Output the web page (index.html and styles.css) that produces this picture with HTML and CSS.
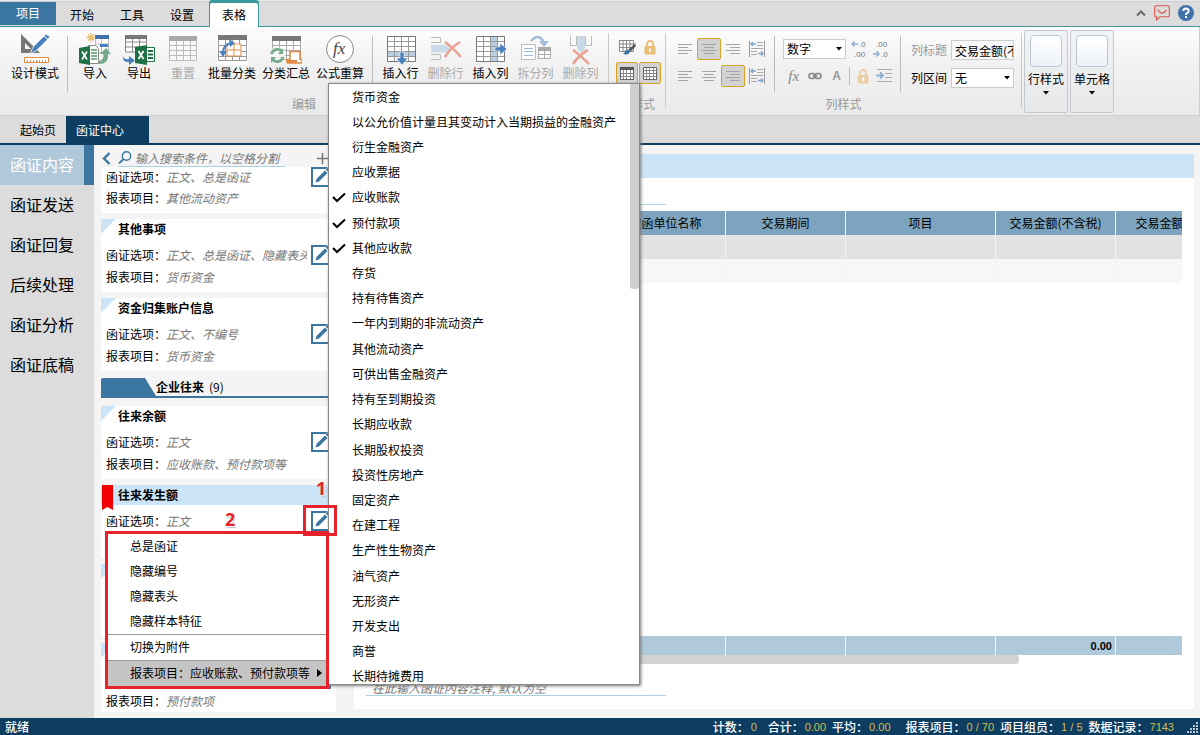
FILE: index.html
```html
<!DOCTYPE html>
<html lang="zh-CN">
<head>
<meta charset="utf-8">
<title>函证中心</title>
<link rel="stylesheet" href="styles.css">
</head>
<body>
<svg class="defs" aria-hidden="true">
  <defs>
    <symbol id="edit" viewBox="0 0 20 20"><rect x="1" y="1" width="18" height="18" fill="#fff" stroke="#3b76a0" stroke-width="2"/><path d="M4.500 15.500l1-3.500L14 3.500l2.500 2.500L8 14.500z" fill="#3b76a0"/><path d="M14.500 2.500l2-2 3 3-2 2z" fill="#3b76a0" stroke="#fff" stroke-width=".6"/></symbol>
    <symbol id="check" viewBox="0 0 14 12"><path d="M1 6l4 4 8-7.500" fill="none" stroke="#000" stroke-width="2"/></symbol>
    <symbol id="down" viewBox="0 0 6 4"><path d="M0 0h6L3 3.600z" fill="#000"/></symbol>
    <symbol id="left-al" viewBox="0 0 16 12"><path d="M1 1.500h14M1 4.500h10M1 7.500h14M1 10.500h10" stroke="#a4a4a4"/></symbol>
    <symbol id="center-al" viewBox="0 0 16 12"><path d="M1 1.500h14M3 4.500h10M1 7.500h14M3 10.500h10" stroke="#a4a4a4"/></symbol>
    <symbol id="right-al" viewBox="0 0 16 12"><path d="M1 1.500h14M5 4.500h10M1 7.500h14M5 10.500h10" stroke="#a4a4a4"/></symbol>
    <symbol id="wrap" viewBox="0 0 16 16"><path d="M.5 0v16M15.500 0v16" stroke="#999"/><path d="M8 1.500h6M8 4.500h6M2 7.500h12M2 10.500h6M2 13.500h6" stroke="#a8a8a8"/><path d="M2 3h5M9 12.500h5M4 1L2 3l2 2M12 10.500l2 2-2 2" fill="none" stroke="#7fa8cf" stroke-width="1.400"/></symbol>
    <symbol id="lock" viewBox="0 0 12 15"><path d="M3 7V4a3 3 0 0 1 6 0v3" fill="none" stroke="#e8bc74" stroke-width="1.800"/><rect x=".5" y="6" width="11" height="8.500" rx="1" fill="#e8bc74"/><path d="M6 8.500v4M4.800 9.500h2.400" stroke="#fff" stroke-width="1.400"/></symbol>
    <symbol id="grid-s" viewBox="0 0 14 13"><path d="M.5.500h13v12H.500z" fill="#fff" stroke="#666"/><path d="M1 3.500h12M1 6.500h12M1 9.500h12M3.500 1v11M6.500 1v11M10.500 1v11" stroke="#888"/></symbol>
    <symbol id="grid-h" viewBox="0 0 14 13"><path d="M.5.500h13v12H.500z" fill="#fff" stroke="#666"/><path d="M0 1.500h14" stroke="#555" stroke-width="3"/><path d="M1 6.500h12M1 9.500h12M3.500 3v9M6.500 3v9M10.500 3v9" stroke="#888"/></symbol>
  </defs>
</svg>

<div class="app">
  <header class="tabbar">
    <button class="file-tab">项目</button>
    <nav class="tabs">
      <button class="tab">开始</button>
      <button class="tab">工具</button>
      <button class="tab">设置</button>
      <button class="tab tab-active">表格</button>
    </nav>
    <div class="window-tools">
      <button aria-label="收起"><svg width="10" height="6" viewBox="0 0 10 6"><path d="M1 5.500L5 1.500l4 4" fill="none" stroke="#666" stroke-width="2"/></svg></button>
      <button aria-label="反馈"><svg width="16" height="16" viewBox="0 0 16 16"><path d="M2 .7h12q1.300 0 1.300 1.300v8.500q0 1.300-1.300 1.300H6l-3.500 3.200v-3.200H2Q.7 11.800.7 10.500V2Q.7.700 2 .7z" fill="none" stroke="#d9574d" stroke-width="1.100"/><path d="M3.500 5l2 1.500M12.500 5l-2 2q-2.300 2.300-5 0" fill="none" stroke="#d9574d" stroke-width="1.200"/></svg></button>
      <button aria-label="帮助"><svg width="16" height="16" viewBox="0 0 16 16"><circle cx="8" cy="8" r="8" fill="#3f72ab"/><path d="M5.300 6Q5.300 3.500 8 3.500T10.700 6Q10.700 7.300 9 8.200 8 8.700 8 10M8 11v2" fill="none" stroke="#fff" stroke-width="2"/></svg></button>
    </div>
  </header>

  <section class="ribbon">
    <div class="group">
      <div class="group-body group-edit">
        <button class="tool wide"><svg viewBox="0 0 32 32"><path d="M2 1v19h19zM6 10l6 6H6z" fill="#777" fill-rule="evenodd"/><path d="M11 21l3-7L27 1l4 3-13 13z" fill="#4a80bd" stroke="#f5f5f5" stroke-width=".8"/><path d="M25 3l4 3.500" stroke="#fff"/><path d="M5.500 24.500h24v5h-24zM8.500 27v2M11.500 27v2M14.500 27v2M17.500 27v2M20.500 27v2M23.500 27v2M26.500 27v2" fill="#fff" stroke="#e28b46"/></svg>设计模式</button>
        <i class="sep"></i>
        <button class="tool"><svg viewBox="0 0 32 32"><path d="M16.500 2.500h13v17h-13zM17 11h12M22.500 3v16" fill="#fff" stroke="#b5bcc4"/><path d="M16 2h14v4H16z" fill="#3f70ad"/><path d="M21 11h8v3h-8z" fill="#4a80bd"/><path d="M12 0v9M7.500 4.500h9M9 1.500l6 6M15 1.500l-6 6" stroke="#edc06d" stroke-width="1.300"/><path d="M9.500 12.500h7l3 3v15h-10z" fill="#fff" stroke="#888"/><path d="M12 17h6M12 20h6M12 23h6M12 26h6" stroke="#56966a" stroke-width="1.600"/><path d="M0 15l11-2v19L0 30z" fill="#1e7145"/><path d="M3 18.500l5 8M8 18.500l-5 8" stroke="#fff" stroke-width="1.700"/><path d="M20 31v-3q5-1 4.500-7H21l6-6 5 6h-3q1 10-9 10z" fill="#74a98c"/></svg>导入</button>
        <button class="tool"><svg viewBox="0 0 32 32"><path d="M2.500 3h21v16h-21zM2.500 9h21M2.500 14h21M9.500 3v16M16.500 3v16" fill="#fff" stroke="#888"/><path d="M2 2h22v4H2z" fill="#777"/><path d="M22.500 14.500h9v14h-9z" fill="#fff" stroke="#1e7145"/><path d="M25 18h5M25 21.500h5M25 25h5" stroke="#1e7145" stroke-width="2"/><path d="M12 14l12-2v20l-12-2z" fill="#1e7145"/><path d="M15.500 18l5 8M20.500 18l-5 8" stroke="#fff" stroke-width="1.800"/><path d="M0 23q1 4 6 3v-3l6 4.500L6 32v-3Q-1 29 0 23z" fill="#4a80bd"/></svg>导出</button>
        <button class="tool disabled"><svg viewBox="0 0 32 32"><path d="M2.500 3.500h27v24h-27zM3 12.500h26M3 17.500h26M3 22.500h26M9.500 7v20M16.500 7v20M23.500 7v20" fill="#f8f8f8" stroke="#bbb"/><path d="M2 3h28v5H2z" fill="#a9a9a9"/></svg>重置</button>
        <button class="tool wide"><svg viewBox="0 0 32 32"><path d="M1 2h31v30H1z" fill="#fff"/><path d="M2.500 3.500h28v24h-28zM3 12.500h27M3 18.500h27M3 23.500h27M9.500 7v20M16.500 7v20M23.500 7v20" fill="#fff" stroke="#999"/><path d="M2 2h29v5H2z" fill="#777"/><path d="M11 11h14v12H11zM18 11v12M11 17h14" fill="#fff" stroke="#e28b46"/><path d="M7 20q0-8 8-10" fill="none" stroke="#4a80bd" stroke-width="2.200"/><path d="M13 6l6 4-5 4zM3 18h8l-4 6z" fill="#4a80bd"/></svg>批量分类</button>
        <button class="tool wide"><svg viewBox="0 0 32 32"><path d="M2.500 4.500h28v22h-28zM3 12.500h27M3 17.500h27M3 22.500h27M9.500 7v20M16.500 7v20M23.500 7v20" fill="#fff" stroke="#aaa"/><path d="M2 3h29v5H2z" fill="#777"/><circle cx="7" cy="22" r="8" fill="#f5f5f5"/><path d="M1.500 21a6 6 0 0 1 10-3M13 24a6 6 0 0 1-10 3" fill="none" stroke="#74a98c" stroke-width="2.800"/><path d="M13 15v6H8zM1 30v-6h5z" fill="#74a98c"/><path d="M20 18.500h10v8h2v2.500q0 1-1 1H18q-1 0-1-1v-2.500h3z" fill="#fff" stroke="#e28b46" stroke-width="1.600"/><path d="M17 27h10v3H17z" fill="#e28b46"/></svg>分类汇总</button>
        <button class="tool wide"><svg viewBox="0 0 32 32"><circle cx="16" cy="16" r="13.500" fill="#fff" stroke="#888"/><text x="9" y="21" class="fx-text">fx</text></svg>公式重算</button>
        <i class="sep"></i>
        <button class="tool mid"><svg viewBox="0 0 32 32"><path d="M2.500 3.500h28v25h-28z" fill="#fff" stroke="#777"/><path d="M3 18h27v5H3z" fill="#b8cfe4"/><path d="M3 8.500h27M3 13.500h27M3 18.500h27M3 23.500h27M9.500 4v24M16.500 4v24M23.500 4v24" stroke="#999"/><path d="M15 19h4v6h4l-6 7-6-7h4z" fill="#4a80bd" stroke="#fff" stroke-width=".6"/></svg>插入行</button>
        <button class="tool mid disabled"><svg viewBox="0 0 32 32"><path d="M1 4.500h9.500v5H1M1 26.500h9.500v-5H1" fill="none" stroke="#bbb"/><path d="M1 12h15l4 3.500-4 4H1z" fill="#cbdae8"/><path d="M15 9q7 5 16 15M30 9Q20 15 15 24" fill="none" stroke="#e9a394" stroke-width="2.600"/></svg>删除行</button>
        <button class="tool mid"><svg viewBox="0 0 32 32"><path d="M1.500 3.500h28v25h-28z" fill="#fff" stroke="#777"/><path d="M16 4h7v24h-7z" fill="#b8cfe4"/><path d="M2 8.500h27M2 13.500h27M2 18.500h27M2 23.500h27M8.500 4v24M15.500 4v24M22.500 4v24" stroke="#999"/><path d="M20 14h5v-4l7 6-7 6v-4h-5z" fill="#4a80bd" stroke="#fff" stroke-width=".6"/></svg>插入列</button>
        <button class="tool mid disabled"><svg viewBox="0 0 32 32"><path d="M11 8q8-9 13 2" fill="none" stroke="#a4bdd8" stroke-width="2.600"/><path d="M19 8h10l-5 6z" fill="#a4bdd8"/><path d="M1.500 11.500h14v15h-14z" fill="#fff" stroke="#bbb"/><path d="M4 15.500h9M4 18.500h9M4 22.500h9" stroke="#9db8d4"/><path d="M18.500 14.500h12v11h-12zM19 21.500h12M24.500 15v10" fill="#fff" stroke="#aaa"/><path d="M18 14h13v4H18z" fill="#aaa"/></svg>拆分列</button>
        <button class="tool mid disabled"><svg viewBox="0 0 32 32"><path d="M5.500 3v9.500h6V3M26.500 3v9.500h-6V3" fill="none" stroke="#bbb"/><path d="M12 3h8v13l-4 4-4-4z" fill="#cbdae8"/><path d="M8 17q7 5 16 14M23 17Q14 22 8 31" fill="none" stroke="#e9a394" stroke-width="2.600"/></svg>删除列</button>
      </div>
      <div class="group-label">编辑</div>
    </div>
    <i class="group-sep"></i>
    <div class="group">
      <div class="group-body style-grid">
        <button class="mini" aria-label="格式刷"><svg width="18" height="16" viewBox="0 0 18 16"><path d="M1.500 1.500h14v11h-14zM2 5h13M2 8.500h13M5 2v10M8.500 2v10M12 2v10" fill="#fff" stroke="#888"/><path d="M17.500 4v3.500l-5 5-2-2z" fill="#555"/><path d="M5 15q2-1 2-3.500l3-1 2 2q-1 4-7 2.500z" fill="#3b76a0"/></svg></button>
        <button class="mini" aria-label="锁定"><svg width="12" height="15"><use href="#lock"/></svg></button>
        <button class="mini pressed" aria-label="表头网格"><svg width="14" height="13"><use href="#grid-h"/></svg></button>
        <button class="mini pressed" aria-label="网格"><svg width="14" height="13"><use href="#grid-s"/></svg></button>
      </div>
      <div class="group-label">表样式</div>
    </div>
    <i class="group-sep"></i>
    <div class="group">
      <div class="group-body">
        <div class="align-grid">
          <button class="mini" aria-label="标题左对齐"><svg width="16" height="12"><use href="#left-al"/></svg></button>
          <button class="mini pressed" aria-label="标题居中"><svg width="16" height="12"><use href="#center-al"/></svg></button>
          <button class="mini" aria-label="标题右对齐"><svg width="16" height="12"><use href="#right-al"/></svg></button>
          <button class="mini" aria-label="标题换行"><svg width="16" height="16"><use href="#wrap"/></svg></button>
          <button class="mini" aria-label="左对齐"><svg width="16" height="12"><use href="#left-al"/></svg></button>
          <button class="mini" aria-label="居中"><svg width="16" height="12"><use href="#center-al"/></svg></button>
          <button class="mini pressed" aria-label="右对齐"><svg width="16" height="12"><use href="#right-al"/></svg></button>
          <button class="mini" aria-label="换行"><svg width="16" height="16"><use href="#wrap"/></svg></button>
        </div>
        <i class="sep"></i>
        <div class="format">
          <div class="format-row">
            <span class="combo"><select aria-label="数据格式"><option>数字</option></select><svg width="6" height="4"><use href="#down"/></svg></span>
            <button class="mini" aria-label="增加小数位"><svg width="16" height="20" viewBox="0 0 16 20"><text x="8" y="8" class="dec">.0</text><text x="3" y="18" class="dec">.00</text><path d="M1 5h6M3.500 2.500L1 5l2.500 2.500" fill="none" stroke="#8fb0d0" stroke-width="1.500"/></svg></button>
            <button class="mini" aria-label="减少小数位"><svg width="16" height="20" viewBox="0 0 16 20"><text x="3" y="8" class="dec">.00</text><text x="8" y="18" class="dec">.0</text><path d="M0 15h6M3.500 12.500L6 15l-2.500 2.500" fill="none" stroke="#8fb0d0" stroke-width="1.500"/></svg></button>
          </div>
          <div class="format-row">
            <button class="mini fx">fx</button>
            <button class="mini" aria-label="链接"><svg width="14" height="8" viewBox="0 0 14 8"><rect x="1" y="1.500" width="6" height="5" rx="2.500" fill="none" stroke="#888" stroke-width="1.600"/><rect x="7" y="1.500" width="6" height="5" rx="2.500" fill="none" stroke="#888" stroke-width="1.600"/><path d="M4.500 4h5" stroke="#888" stroke-width="1.500"/></svg></button>
            <button class="mini letter">A</button>
            <i class="sep-s"></i>
            <button class="mini faded" aria-label="锁定列"><svg width="12" height="15"><use href="#lock"/></svg></button>
            <button class="mini" aria-label="缩进"><svg width="16" height="14" viewBox="0 0 16 14"><path d="M1 .5h15M9 4.500h7M9 8.500h7M1 12.500h15" stroke="#aaa"/><path d="M0 6.500h6M4 3.500l3 3-3 3" fill="none" stroke="#8fb0d0" stroke-width="1.800"/></svg></button>
          </div>
        </div>
        <i class="sep"></i>
        <div class="fields">
          <label class="off" for="col-title">列标题</label><input id="col-title" value="交易金额(不含税)">
          <label for="col-range">列区间</label><span class="combo"><select id="col-range"><option>无</option></select><svg width="6" height="4"><use href="#down"/></svg></span>
        </div>
      </div>
      <div class="group-label">列样式</div>
    </div>
    <i class="group-sep"></i>
    <div class="galleries">
      <button class="gallery"><i class="swatch"></i>行样式<svg width="6" height="4"><use href="#down"/></svg></button>
      <button class="gallery"><i class="swatch"></i>单元格<svg width="6" height="4"><use href="#down"/></svg></button>
    </div>
  </section>

  <nav class="doc-tabs">
    <button class="doc-tab">起始页</button>
    <button class="doc-tab doc-active">函证中心</button>
  </nav>

  <div class="body">
    <nav class="side">
      <button class="side-item side-active">函证内容</button>
      <button class="side-item">函证发送</button>
      <button class="side-item">函证回复</button>
      <button class="side-item">后续处理</button>
      <button class="side-item">函证分析</button>
      <button class="side-item">函证底稿</button>
    </nav>

    <section class="panel">
      <div class="search">
        <button aria-label="返回"><svg width="9" height="13" viewBox="0 0 9 13"><path d="M7.500 1L2 6.500 7.500 12" fill="none" stroke="#3b76a0" stroke-width="2.400"/></svg></button>
        <div class="search-box">
          <svg width="14" height="13" viewBox="0 0 14 13"><circle cx="8.500" cy="5" r="4.200" fill="none" stroke="#3b76a0" stroke-width="1.400"/><path d="M5.500 8L1 12.500" stroke="#3b76a0" stroke-width="1.800"/></svg>
          <input aria-label="搜索" placeholder="输入搜索条件，以空格分割">
        </div>
        <button class="add" aria-label="新增"><svg width="11" height="11" viewBox="0 0 11 11"><path d="M5.500 0v11M0 5.500h11" stroke="#777" stroke-width="1.500"/></svg></button>
      </div>
      <div class="list">
        <article class="card card-cut">
          <div class="row"><span>函证选项：</span><em>正文、总是函证</em><button aria-label="编辑"><svg width="20" height="20"><use href="#edit"/></svg></button></div>
          <div class="row"><span>报表项目：</span><em>其他流动资产</em></div>
        </article>
        <article class="card">
          <h3>其他事项</h3>
          <div class="row"><span>函证选项：</span><em>正文、总是函证、隐藏表头</em><button aria-label="编辑"><svg width="20" height="20"><use href="#edit"/></svg></button></div>
          <div class="row"><span>报表项目：</span><em>货币资金</em></div>
        </article>
        <article class="card">
          <h3>资金归集账户信息</h3>
          <div class="row"><span>函证选项：</span><em>正文、不编号</em><button aria-label="编辑"><svg width="20" height="20"><use href="#edit"/></svg></button></div>
          <div class="row"><span>报表项目：</span><em>货币资金</em></div>
        </article>
        <div class="section"><svg width="55" height="18" viewBox="0 0 55 18"><path d="M0 18V2q0-2 2-2h42l11 18z" fill="#3b76a0"/></svg><b>企业往来</b><span>(9)</span></div>
        <article class="card">
          <h3>往来余额</h3>
          <div class="row"><span>函证选项：</span><em>正文</em><button aria-label="编辑"><svg width="20" height="20"><use href="#edit"/></svg></button></div>
          <div class="row"><span>报表项目：</span><em>应收账款、预付款项等</em></div>
        </article>
        <article class="card card-active">
          <svg class="bookmark" width="11" height="25" viewBox="0 0 11 25"><path d="M0 0h11v25l-5.500-3L0 25z" fill="#f00000"/></svg>
          <h3>往来发生额</h3>
          <div class="row"><span>函证选项：</span><em>正文</em><button aria-label="编辑"><svg width="20" height="20"><use href="#edit"/></svg></button></div>
          <div class="row"></div>
        </article>
        <article class="card"><h3></h3><div class="row"></div><div class="row"></div></article>
        <article class="card">
          <h3></h3>
          <div class="row"><em></em><button aria-label="编辑"><svg width="20" height="20"><use href="#edit"/></svg></button></div>
          <div class="row"><span>报表项目：</span><em>预付款项</em></div>
        </article>
      </div>
    </section>

    <main class="sheet">
      <div class="sheet-head"></div>
      <input class="line-input title-input" aria-label="标题">
      <div class="grid-wrap">
        <table>
          <colgroup><col class="c"><col class="c"><col class="c"><col class="c"><col class="c-wide"><col class="c"><col class="c"></colgroup>
          <thead><tr><th></th><th></th><th>被函单位名称</th><th>交易期间</th><th>项目</th><th>交易金额(不含税)</th><th>交易金额(含税)</th></tr></thead>
          <tbody>
            <tr><td></td><td></td><td></td><td></td><td></td><td></td><td></td></tr>
            <tr><td></td><td></td><td></td><td></td><td></td><td></td><td></td></tr>
          </tbody>
        </table>
        <table class="totals">
          <colgroup><col class="c"><col class="c"><col class="c"><col class="c"><col class="c-wide"><col class="c"><col class="c"></colgroup>
          <tbody><tr><td></td><td></td><td></td><td></td><td></td><td>0.00</td><td></td></tr></tbody>
        </table>
      </div>
      <div class="hscroll"><i></i></div>
      <input class="line-input note-input" aria-label="注释" placeholder="在此输入函证内容注释, 默认为空">
    </main>
  </div>

  <footer class="status">
    <span>就绪</span>
    <div class="stats">
      <span>计数：<b class="count">0</b></span><span>合计：<b>0.00</b></span><span>平均：<b>0.00</b></span>
    </div>
    <div class="stats">
      <span>报表项目：<b>0 / 70</b></span><span>项目组员：<b>1 / 5</b></span><span>数据记录：<b>7143</b></span>
    </div>
    <svg class="grip" width="12" height="12" viewBox="0 0 12 12"><path d="M9 0h2v2H9zM6 3h2v2H6zM9 3h2v2H9zM3 6h2v2H3zM6 6h2v2H6zM9 6h2v2H9zM0 9h2v2H0zM3 9h2v2H3zM6 9h2v2H6zM9 9h2v2H9z" fill="#b9c9d6"/></svg>
  </footer>

  <div class="submenu" role="menu">
    <div class="submenu-list">
      <button role="menuitem">货币资金</button>
      <button role="menuitem">以公允价值计量且其变动计入当期损益的金融资产</button>
      <button role="menuitem">衍生金融资产</button>
      <button role="menuitem">应收票据</button>
      <button role="menuitem"><svg width="14" height="12"><use href="#check"/></svg>应收账款</button>
      <button role="menuitem"><svg width="14" height="12"><use href="#check"/></svg>预付款项</button>
      <button role="menuitem"><svg width="14" height="12"><use href="#check"/></svg>其他应收款</button>
      <button role="menuitem">存货</button>
      <button role="menuitem">持有待售资产</button>
      <button role="menuitem">一年内到期的非流动资产</button>
      <button role="menuitem">其他流动资产</button>
      <button role="menuitem">可供出售金融资产</button>
      <button role="menuitem">持有至到期投资</button>
      <button role="menuitem">长期应收款</button>
      <button role="menuitem">长期股权投资</button>
      <button role="menuitem">投资性房地产</button>
      <button role="menuitem">固定资产</button>
      <button role="menuitem">在建工程</button>
      <button role="menuitem">生产性生物资产</button>
      <button role="menuitem">油气资产</button>
      <button role="menuitem">无形资产</button>
      <button role="menuitem">开发支出</button>
      <button role="menuitem">商誉</button>
      <button role="menuitem">长期待摊费用</button>
    </div>
    <i class="vscroll"></i>
  </div>

  <div class="context" role="menu">
    <button role="menuitem">总是函证</button>
    <button role="menuitem">隐藏编号</button>
    <button role="menuitem">隐藏表头</button>
    <button role="menuitem">隐藏样本特征</button>
    <button role="menuitem" class="ruled">切换为附件</button>
    <button role="menuitem" class="ruled hot">报表项目：应收账款、预付款项等<svg width="5" height="8" viewBox="0 0 5 8"><path d="M0 0l5 4-5 4z"/></svg></button>
  </div>
  <i class="mark-box"></i>
  <b class="mark mark-one">1</b>
  <b class="mark mark-two">2</b>
</div>
</body>
</html>
```
FILE: styles.css
```css
* { box-sizing: border-box; }
body {
  margin: 0;
  font: 12px/16px "Noto Sans CJK SC", "Open Sans", sans-serif;
  color: #000;
}
button, input, select {
  font: inherit;
  color: inherit;
  border: 0;
  padding: 0;
  margin: 0;
  background: none;
  border-radius: 0;
}
button { white-space: nowrap; }
svg { display: block; flex: none; }
input { outline: 0; min-width: 0; }
.defs { position: absolute; width: 0; height: 0; }
.app {
  position: relative;
  display: flex;
  flex-direction: column;
  height: 100vh;
  overflow: hidden;
  background: #dcdcdc;
}

/* top tabs */
.tabbar {
  display: flex;
  flex: none;
  height: 27px;
  padding-top: 2px;
  border-bottom: 1px solid #3a9a9c;
  box-shadow: inset 0 1px #e6eaec, inset 0 2px #cfcfcf;
}
.file-tab { width: 56px; height: 23px; padding-bottom: 2px; background: #3b76a0; color: #fff; }
.tabs { display: flex; padding-left: 1px; height: 25px; }
.tab { width: 50px; }
.tab-active {
  height: 25px;
  margin-left: 2px;
  background: #fff;
  border: 1px solid #3a9a9c;
  border-bottom: 0;
  border-radius: 3px 3px 0 0;
  box-shadow: 0 -2px #3a9a9c;
}
.window-tools { display: flex; align-items: center; gap: 8px; margin: 0 6px 2px auto; }

/* ribbon */
.ribbon {
  display: flex;
  flex: none;
  height: 89px;
  background: linear-gradient(#fdfdfd, #f1f1f1 45%, #eaeaea);
  border-bottom: 1px solid #cfcfcf;
  border-right: 1px solid #ccc;
}
.group { display: flex; flex-direction: column; flex: none; }
.group-body { display: flex; flex: 1; align-items: flex-start; }
.group-edit { padding: 0 5px 0 8px; }
.group-label { text-align: center; color: #999; padding-bottom: 3px; }
.group-sep { flex: none; width: 1px; height: 75px; margin-top: 6px; background: #c8c8c8; }
.sep { width: 1px; height: 56px; margin: 9px 5px 0; background: #bbb; }
.tool { display: flex; flex-direction: column; align-items: center; width: 44px; padding-top: 6px; }
.tool svg { width: 32px; height: 32px; }
.mid { width: 45px; }
.wide { width: 54px; }
.disabled { color: #aaa; }
.fx-text { font: italic 17px "Liberation Serif", serif; fill: #444; }
.mini { display: flex; align-items: center; justify-content: center; width: 22px; height: 22px; }
.pressed { background: #d2d2d2; border: 1px solid #d8a225; border-radius: 2px; }
.style-grid { display: grid; grid-template-columns: 23px 23px; align-content: start; row-gap: 4px; padding: 9px 3px 0 7px; }
.align-grid { display: grid; grid-template-columns: repeat(4, 24px); row-gap: 5px; padding: 11px 0 0 7px; }
.align-grid .mini { width: 24px; }
.format { display: flex; flex-direction: column; gap: 5px; width: 115px; padding: 11px 0 0 3px; }
.format-row { display: flex; align-items: center; height: 22px; }
.combo { display: grid; width: 63px; height: 20px; background: #fff; border: 1px solid #ccc; }
.combo select { grid-area: 1 / 1; appearance: none; padding-left: 3px; line-height: 18px; width: 100%; outline: 0; }
.combo svg { grid-area: 1 / 1; justify-self: end; align-self: center; margin-right: 3px; pointer-events: none; }
.format .combo { margin-right: 2px; }
.dec { font: 8px "Liberation Sans", sans-serif; fill: #777; }
.fx { font: italic 15px "Liberation Serif", serif; color: #888; }
.letter { font: bold 12px "Liberation Sans", sans-serif; color: #999; }
.sep-s { width: 1px; height: 18px; margin: 0 2px; background: #bbb; }
.faded { opacity: .6; }
.fields { display: grid; grid-template-columns: 40px 63px; row-gap: 8px; align-items: center; padding: 13px 7px 0 5px; }
.fields input { height: 20px; padding-left: 3px; border: 1px solid #ccc; background: #f8f8f8; }
.off { color: #999; }
.galleries { display: flex; gap: 2px; padding: 3px 2px; }
.gallery {
  display: flex;
  flex-direction: column;
  align-items: center;
  width: 44px;
  height: 83px;
  padding-top: 4px;
  border: 1px solid #c3c8cf;
  border-radius: 2px;
  background: linear-gradient(#f1f3f5, #e6e8ea);
}
.swatch { width: 32px; height: 32px; margin-bottom: 4px; border: 1px solid #b9c7d8; border-radius: 4px; background: linear-gradient(#fff, #eef2f7); }
.gallery svg { margin-top: 4px; }

/* document tabs */
.doc-tabs { display: flex; flex: none; height: 29px; padding-left: 10px; border-bottom: 2px solid #0d3e61; }
.doc-tab { width: 56px; }
.doc-active { width: 83px; padding-left: 10px; text-align: left; background: #0d3e61; color: #fff; }

/* body */
.body { display: flex; flex: 1; min-height: 0; background: #f4f4f4; }
.side { flex: none; width: 94px; background: #dcdcdc; }
.side-item { display: block; width: 100%; height: 40px; padding: 0 0 2px 10px; font-size: 16px; line-height: 24px; text-align: left; }
.side-active { background: #b0c9da; border-right: 10px solid #3b76a0; color: #fff; }

.panel { display: flex; flex-direction: column; flex: none; width: 242px; padding: 0 0 6px 7px; }
.search { display: flex; align-items: center; flex: none; height: 22px; padding: 4px 8px 0 0; }
.search button { margin-right: 7px; }
.search-box { display: flex; align-items: center; flex: 1; gap: 3px; border-bottom: 1px solid #a9d3e0; }
.search-box input { flex: 1; height: 16px; }
.search .add { margin: 0 0 0 32px; }
::placeholder { color: #777; font-style: italic; opacity: 1; }
.search > button:first-child { padding-left: 1px; }
.list { flex: 1; min-height: 0; overflow: hidden; }
.card { position: relative; height: 73px; margin-bottom: 6px; background: #fff; }
.card h3 {
  height: 20px;
  margin: 0 0 5px;
  padding-left: 17px;
  font-size: 12px;
  line-height: 20px;
  background: linear-gradient(135deg, #cce4f7 10px, transparent 11px);
}
.row { display: flex; align-items: center; height: 22px; padding: 0 5px; }
.row em { flex: 1; overflow: hidden; margin-right: 4px; white-space: nowrap; color: #777; }
.card-cut { height: 46px; }
.card-cut .row:first-child { height: 20px; }
.card-active h3 { background: #cce4f7; }
.bookmark { position: absolute; left: 1px; top: 0; }
.section { display: flex; align-items: center; height: 20px; margin: 7px 0 8px; border-bottom: 2px solid #3b76a0; }
.section span { margin-left: 5px; }

.sheet { display: flex; flex-direction: column; flex: 1; min-width: 0; margin: 9px 6px 9px 18px; background: #fff; }
.sheet-head { flex: none; height: 24px; background: #cce4f7; }
.line-input { flex: none; width: 300px; margin-left: 12px; border-bottom: 1px solid #a9d3e0; }
.title-input { height: 27px; margin-bottom: 6px; }
.note-input { height: 15px; margin-top: 17px; margin-bottom: 13px; padding-left: 6px; }
.grid-wrap { display: flex; flex-direction: column; justify-content: space-between; flex: 1; min-height: 0; margin: 0 12px; overflow: hidden; }
table { flex: none; width: 870px; table-layout: fixed; border-collapse: separate; border-spacing: 0; }
.c { width: 120px; }
.c-wide { width: 150px; }
th, td { height: 24px; padding: 0; border-right: 1px solid #f3f3f3; }
th { background: #7da4be; font-weight: normal; }
td { background: #f7f7f7; }
tbody tr:first-child td { background: #e2e2e2; }
.totals tbody tr:first-child td { height: 19px; padding-right: 3px; background: #b0c9da; text-align: right; font: bold 11px "Liberation Sans Narrow", "Liberation Sans", sans-serif; }
.hscroll { flex: none; height: 9px; margin: 0 12px; }
.hscroll i { display: block; width: 80%; height: 9px; border-radius: 3px; background: #d3d3d3; }

/* status bar */
.status { display: flex; align-items: center; flex: none; height: 17px; padding-left: 5px; background: #0d3e61; color: #fff; font-weight: 500; }
.stats { display: flex; gap: 6px; margin-left: 15px; }
.status > span + .stats { margin-left: auto; }
.stats span { display: flex; align-items: center; gap: 1px; }
.stats b { font: 11px "Liberation Sans Narrow", "Liberation Sans", sans-serif; color: #d3bd4d; }
.stats .count { min-width: 12px; padding-left: 1px; }
.grip { margin: 3px 1px 0 13px; }

/* floating menus */
.submenu {
  position: absolute;
  left: 328px;
  top: 83px;
  width: 312px;
  height: 602px;
  overflow: hidden;
  background: #fff;
  border: 1px solid #888;
  box-shadow: 1px 1px 3px #777;
}
.submenu-list { display: grid; grid-auto-rows: 1fr; height: 605px; }
.submenu button { display: flex; align-items: center; padding-left: 23px; text-align: left; }
.submenu button svg { margin: 0 6px 0 -20px; }
.vscroll { position: absolute; right: 0; top: 0; width: 9px; height: 205px; background: #cfcfcf; border-radius: 0 0 3px 3px; }
.context {
  position: absolute;
  left: 105px;
  top: 531px;
  width: 224px;
  background: #fff;
  border: 3px solid #e8222b;
}
.context button { display: flex; align-items: center; width: 100%; height: 25px; padding: 0 0 2px 22px; }
.context .ruled { height: 26px; border-top: 1px solid #999; }
.context .hot { background: #c4c4c4; gap: 7px; }
.mark-box { position: absolute; left: 303px; top: 505px; width: 34px; height: 31px; border: 3px solid #e8222b; }
.mark { position: absolute; font: bold 18px/20px "Open Sans", sans-serif; color: #e8222b; text-shadow: 1px 1px 1px #fff, 1px 2px 1px #bbb; }
.mark-one { left: 316px; top: 478px; }
.mark-two { left: 225px; top: 509px; }
```
